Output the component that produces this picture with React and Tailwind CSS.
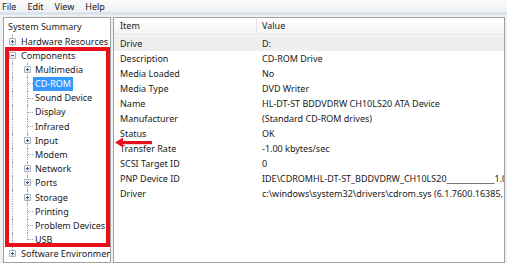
import React from "react";

const font = { fontFamily: '"Noto Sans", "Open Sans", "Liberation Sans", sans-serif' };

function Expander({ open }) {
  return (
    <span className="relative inline-flex h-[7px] w-[7px] shrink-0 items-center justify-center rounded-[1px] border border-[#a9b0bb] bg-gradient-to-b from-white to-[#dfe3e8]">
      <span className="absolute h-px w-[3px] bg-[#3a5a8a]" />
      {!open && <span className="absolute h-[3px] w-px bg-[#3a5a8a]" />}
    </span>
  );
}

const children = [
  { label: "Multimedia", exp: true },
  { label: "CD-ROM", selected: true },
  { label: "Sound Device" },
  { label: "Display" },
  { label: "Infrared" },
  { label: "Input", exp: true },
  { label: "Modem" },
  { label: "Network", exp: true },
  { label: "Ports", exp: true },
  { label: "Storage", exp: true },
  { label: "Printing" },
  { label: "Problem Devices" },
  { label: "USB", last: true },
];

const rows = [
  ["Drive", "D:"],
  ["Description", "CD-ROM Drive"],
  ["Media Loaded", "No"],
  ["Media Type", "DVD Writer"],
  ["Name", "HL-DT-ST BDDVDRW CH10LS20 ATA Device"],
  ["Manufacturer", "(Standard CD-ROM drives)"],
  ["Status", "OK"],
  ["Transfer Rate", "-1.00 kbytes/sec"],
  ["SCSI Target ID", "0"],
  ["PNP Device ID", "IDE\\CDROMHL-DT-ST_BDDVDRW_CH10LS20____________1.0"],
  ["Driver", "c:\\windows\\system32\\drivers\\cdrom.sys (6.1.7600.16385, 1"],
];

function TreeRow({ children: content, className = "" }) {
  return <div className={"relative flex h-[14.2px] items-center whitespace-nowrap " + className}>{content}</div>;
}

const line1 = "absolute left-[8px] top-0 border-l border-dotted border-[#a0a0a0] ";
const line2 = "absolute left-[23px] top-0 border-l border-dotted border-[#a0a0a0] ";

export default function App() {
  return (
    <div className="relative flex h-[263px] w-[507px] flex-col overflow-hidden bg-[#f0f0f0] text-[9px] text-[#1a1a1a]" style={font}>
      <div className="flex h-[12px] items-center gap-[11px] bg-gradient-to-b from-[#fbfbfc] to-[#eef0f4] pl-[2px] leading-none">
        <span>File</span>
        <span>Edit</span>
        <span>View</span>
        <span>Help</span>
      </div>
      <div className="h-[3px] bg-[#dbe3ef]" />
      <div className="flex flex-1 gap-[2px] pl-[3px] pr-[2px] pt-[2px]">
        <div className="relative w-[108px] overflow-hidden border border-[#a0a0a0] bg-white pt-[2px]">
          <TreeRow className="pl-[4px]">System Summary</TreeRow>
          <TreeRow className="pl-[5px]">
            <span className={line1 + "h-full"} />
            <span className="relative z-10 mr-[5px]"><Expander /></span>Hardware Resources
          </TreeRow>
          <TreeRow className="pl-[5px]">
            <span className={line1 + "h-full"} />
            <span className="relative z-10 mr-[5px]"><Expander open /></span>Components
          </TreeRow>
          {children.map((c) => (
            <TreeRow key={c.label} className="pl-[20px]">
              <span className={line1 + "h-full"} />
              <span className={line2 + (c.last ? "h-1/2" : "h-full")} />
              {c.exp ? (
                <span className="relative z-10 mr-[4px]"><Expander /></span>
              ) : (
                <span className="ml-[4px] mr-[2px] w-[5px] border-t border-dotted border-[#a0a0a0]" />
              )}
              <span className={c.selected ? "-ml-[2px] bg-[#3399ff] px-[2px] text-white" : ""}>{c.label}</span>
            </TreeRow>
          ))}
          <TreeRow className="pl-[5px]">
            <span className={line1 + "h-1/2"} />
            <span className="relative z-10 mr-[5px]"><Expander /></span>Software Environment
          </TreeRow>
        </div>
        <div className="flex-1 overflow-hidden border border-[#a0a0a0] bg-white">
          <div className="flex h-[17px] items-center border-b border-[#e3e3e3] bg-gradient-to-b from-white to-[#f4f4f4]">
            <div className="w-[143px] border-r border-[#e3e3e3] pl-[6px]">Item</div>
            <div className="pl-[5px]">Value</div>
          </div>
          <div className="pt-[1px]">
            {rows.map(([k, v], i) => (
              <div key={k} className={"flex h-[15px] items-center whitespace-nowrap " + (i === 0 ? "bg-[#efefef]" : "")}>
                <div className="w-[143px] shrink-0 pl-[6px]">{k}</div>
                <div className="pl-[5px]">{v}</div>
              </div>
            ))}
          </div>
        </div>
      </div>
      <div className="absolute left-[5px] top-[47px] h-[200px] w-[105px] border-[4px] border-[#e8101a]" />
      <svg className="absolute left-[114px] top-[136px]" width="40" height="13" viewBox="0 0 40 13">
        <polygon points="1,6.5 9,1.5 9,11.5" fill="#e8101a" />
        <rect x="8" y="5" width="30" height="3.2" fill="#e8101a" />
      </svg>
    </div>
  );
}
